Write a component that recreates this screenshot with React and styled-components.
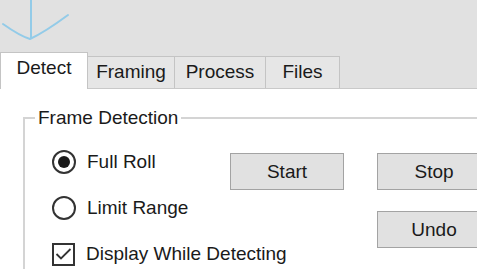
import styled, { createGlobalStyle } from "styled-components";

const GlobalStyle = createGlobalStyle`
  html, body {
    margin: 0;
    padding: 0;
    background: #e1e1e1;
    overflow: hidden;
  }
  body {
    font-family: "Liberation Sans", Arial, sans-serif;
    color: #1a1a1a;
  }
`;

const Window = styled.div`
  width: 477px;
  height: 269px;
  display: flex;
  flex-direction: column;
  overflow: hidden;
  background: #e1e1e1;
  font-size: 19px;
`;

const TopBar = styled.div`
  height: 52px;
  flex-shrink: 0;
  svg {
    display: block;
  }
`;

const TabStrip = styled.div`
  display: flex;
  align-items: flex-end;
  height: 36px;
  flex-shrink: 0;
  border-bottom: 1px solid #c9c9c9;
`;

const Tab = styled.div`
  width: ${(p) => p.w}px;
  height: ${(p) => (p.active ? 37 : 32)}px;
  box-sizing: border-box;
  display: flex;
  align-items: center;
  justify-content: center;
  background: ${(p) => (p.active ? "#ffffff" : "#e6e6e6")};
  border: 1px solid #c4c4c4;
  border-bottom: none;
  border-left: ${(p) => (p.first || p.active ? "1px solid #c4c4c4" : "none")};
  padding-bottom: ${(p) => (p.active ? 6 : 1)}px;
  margin-bottom: ${(p) => (p.active ? -1 : 0)}px;
  position: relative;
  z-index: ${(p) => (p.active ? 1 : 0)};
`;

const Panel = styled.div`
  flex: 1;
  background: #ffffff;
  padding-top: 18px;
  padding-left: 23px;
  overflow: hidden;
`;

const Group = styled.fieldset`
  margin: 0;
  padding: 0;
  width: 520px;
  border: 2px solid #d4d4d4;
  min-height: 200px;
`;

const Legend = styled.legend`
  margin-left: 10px;
  padding: 0 3px;
  line-height: 22px;
`;

const GroupBody = styled.div`
  display: grid;
  grid-template-columns: 178px 114px 33px 114px;
  grid-template-rows: 58px auto;
  padding: 10px 0 0 27px;
`;

const Options = styled.div`
  grid-column: 1 / 3;
  grid-row: 1 / 3;
  display: flex;
  flex-direction: column;
`;

const Option = styled.label`
  height: 46px;
  display: flex;
  align-items: center;
  gap: 11px;
  white-space: nowrap;
`;

const Radio = styled.span`
  width: 24px;
  height: 24px;
  box-sizing: border-box;
  border: 2px solid #333333;
  border-radius: 50%;
  display: flex;
  align-items: center;
  justify-content: center;
  flex-shrink: 0;
  &::after {
    content: "";
    width: 12px;
    height: 12px;
    border-radius: 50%;
    background: ${(p) => (p.checked ? "#1a1a1a" : "transparent")};
  }
`;

const Check = styled.span`
  width: 23px;
  height: 23px;
  box-sizing: border-box;
  border: 2px solid #333333;
  display: flex;
  align-items: center;
  justify-content: center;
  flex-shrink: 0;
`;

const Button = styled.div`
  grid-column: ${(p) => p.col};
  grid-row: ${(p) => p.row};
  margin-top: 14px;
  height: 37px;
  box-sizing: border-box;
  background: #e1e1e1;
  border: 1px solid #a3a3a3;
  display: flex;
  align-items: center;
  justify-content: center;
  position: relative;
  z-index: 1;
`;

function Cursor() {
  return (
    <svg width="80" height="44" viewBox="0 0 80 44">
      <g fill="none" stroke="#93cbe8" strokeWidth="2" strokeLinecap="round">
        <path d="M31 0 L31 38" />
        <path d="M3 24 Q20 36 30 39 Q45 32 68 15" />
      </g>
    </svg>
  );
}

export default function App() {
  return (
    <Window>
      <GlobalStyle />
      <TopBar>
        <Cursor />
      </TopBar>
      <TabStrip>
        <Tab w={88} active first>
          Detect
        </Tab>
        <Tab w={87}>Framing</Tab>
        <Tab w={91}>Process</Tab>
        <Tab w={74}>Files</Tab>
      </TabStrip>
      <Panel>
        <Group>
          <Legend>Frame Detection</Legend>
          <GroupBody>
            <Options>
              <Option>
                <Radio checked />
                Full Roll
              </Option>
              <Option>
                <Radio />
                Limit Range
              </Option>
              <Option>
                <Check>
                  <svg width="17" height="14" viewBox="0 0 17 14">
                    <path
                      d="M1.5 7 L6 11.5 L15.5 2"
                      fill="none"
                      stroke="#333"
                      strokeWidth="1.8"
                    />
                  </svg>
                </Check>
                Display While Detecting
              </Option>
            </Options>
            <Button col={2} row={1}>
              Start
            </Button>
            <Button col={4} row={1}>
              Stop
            </Button>
            <Button col={4} row={2}>
              Undo
            </Button>
          </GroupBody>
        </Group>
      </Panel>
    </Window>
  );
}
